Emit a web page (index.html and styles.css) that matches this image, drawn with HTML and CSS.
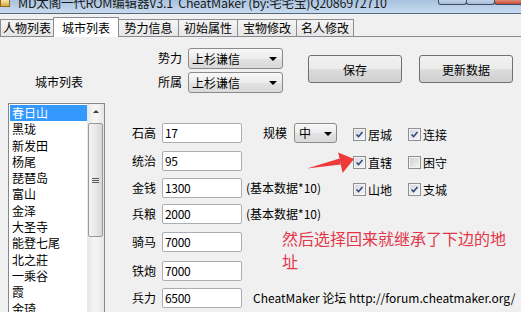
FILE: index.html
```html
<!DOCTYPE html>
<html lang="zh-CN">
<head>
<meta charset="utf-8">
<title>MD太阁一代ROM编辑器</title>
<link rel="stylesheet" href="styles.css">
</head>
<body>
<div class="window">
  <div class="titlebar">
    <span class="app-icon"></span>
    <span class="title">MD太阁一代ROM编辑器V3.1  CheatMaker (by:宅宅宝)Q2086972710</span>
    <div class="winbtns"><span class="wb"></span><span class="wb"></span><span class="wb close"></span></div>
  </div>
  <div class="tabs">
    <div class="tab t1">人物列表</div>
    <div class="tab t2 active">城市列表</div>
    <div class="tab t3">势力信息</div>
    <div class="tab t4">初始属性</div>
    <div class="tab t5">宝物修改</div>
    <div class="tab t6">名人修改</div>
  </div>
  <div class="client">
    <div class="left">
      <div class="list-title">城市列表</div>
      <div class="listbox">
        <ul class="items">
          <li class="sel">春日山</li>
          <li>黑珑</li>
          <li>新发田</li>
          <li>杨尾</li>
          <li>琵琶岛</li>
          <li>富山</li>
          <li>金泽</li>
          <li>大圣寺</li>
          <li>能登七尾</li>
          <li>北之莊</li>
          <li>一乘谷</li>
          <li>霞</li>
          <li>金琦</li>
        </ul>
        <div class="vscroll">
          <div class="sb-up"><span class="tri-up"></span></div>
          <div class="thumb"><span class="grip"></span></div>
        </div>
      </div>
    </div>
    <div class="right">
      <div class="top">
        <div class="combos">
          <span class="lbl">势力</span><div class="combo">上杉谦信</div>
          <span class="lbl">所属</span><div class="combo">上杉谦信</div>
        </div>
        <div class="btn btn-save">保存</div>
        <div class="btn btn-refresh">更新数据</div>
      </div>
      <div class="fields">
        <span class="flbl">石高</span><div class="inp">17</div>
        <div class="scale"><span class="scale-lbl">规模</span><div class="combo small">中</div></div>
        <div class="cb c4"><span class="box on"><svg viewBox="0 0 13 13"><path d="M3 6.5 L5.4 9 L10 3.5"/></svg></span>居城</div>
        <div class="cb c5"><span class="box on"><svg viewBox="0 0 13 13"><path d="M3 6.5 L5.4 9 L10 3.5"/></svg></span>连接</div>

        <span class="flbl">统治</span><div class="inp">95</div>
        <div class="cb c4"><span class="box on"><svg viewBox="0 0 13 13"><path d="M3 6.5 L5.4 9 L10 3.5"/></svg></span>直辖</div>
        <div class="cb c5"><span class="box off"></span>困守</div>

        <span class="flbl">金钱</span><div class="inp">1300</div>
        <div class="note">(基本数据*10)</div>
        <div class="cb c4"><span class="box on"><svg viewBox="0 0 13 13"><path d="M3 6.5 L5.4 9 L10 3.5"/></svg></span>山地</div>
        <div class="cb c5"><span class="box on"><svg viewBox="0 0 13 13"><path d="M3 6.5 L5.4 9 L10 3.5"/></svg></span>支城</div>

        <span class="flbl">兵粮</span><div class="inp">2000</div>
        <div class="note">(基本数据*10)</div>

        <span class="flbl">骑马</span><div class="inp">7000</div>
        <div class="memo">然后选择回来就继承了下边的地<br>址</div>

        <span class="flbl">铁炮</span><div class="inp">7000</div>

        <span class="flbl">兵力</span><div class="inp">6500</div>
        <div class="foot">CheatMaker 论坛 http://forum.cheatmaker.org/</div>
      </div>
    </div>
  </div>
  <svg class="annot" viewBox="0 0 521 312" aria-hidden="true">
    <polygon points="307,168.5 340.8,164.6 339.6,158.6"/>
    <polygon points="354,159 338.2,152.5 342.6,173"/>
  </svg>
</div>
</body>
</html>
```
FILE: styles.css
```css
html, body {
  margin: 0;
  padding: 0;
}
body {
  width: 521px;
  height: 312px;
  overflow: hidden;
  background: #f0f0f0;
  font-family: "Noto Sans CJK SC", "Noto Sans", sans-serif;
  font-size: 12px;
  color: #000;
}
.window {
  position: relative;
  height: 312px;
  overflow: hidden;
}

/* title bar */
.titlebar {
  height: 13px;
  border-bottom: 1px solid #56687e;
  background: linear-gradient(#a8c2de, #c8dbef);
  display: flex;
  align-items: flex-start;
  overflow: hidden;
}
.app-icon {
  flex: none;
  width: 8px;
  height: 6px;
  background: linear-gradient(#f6e7b0, #d9a93a);
  border: 1px solid #8a6d1e;
  border-top: none;
}
.title {
  margin-left: 8px;
  margin-top: -3px;
  font-size: 12.5px;
  line-height: 12.5px;
  letter-spacing: -0.2px;
  white-space: pre;
  color: #1a1a1a;
}
.winbtns {
  margin-left: auto;
  display: flex;
}
.wb {
  width: 27px;
  height: 4px;
  border: 1px solid #3c4d65;
  border-top: none;
  border-radius: 0 0 3px 3px;
  background: linear-gradient(#c2d3e6, #a4bad4);
  margin-right: -1px;
}
.wb.close {
  width: 43px;
  margin-right: -18px;
  background: linear-gradient(#e08a74, #c74a36);
}

/* tabs */
.tabs {
  height: 22px;
  display: flex;
  align-items: flex-end;
  border-bottom: 1px solid #898c95;
}
.tab {
  box-sizing: border-box;
  height: 17px;
  border: 1px solid #898c95;
  border-bottom: none;
  margin-right: -1px;
  background: linear-gradient(#f4f4f4, #e6e6e6);
  text-align: center;
  line-height: 16px;
  font-size: 12px;
}
.tab.active {
  position: relative;
  z-index: 1;
  height: 20px;
  margin-bottom: -1px;
  background: #fff;
  line-height: 17px;
  padding-top: 1px;
}
.t1 { width: 54px; }
.t2 { width: 66px; }
.t3 { width: 61px; }
.t4 { width: 60px; }
.t5 { width: 60px; }
.t6 { width: 58px; }

/* client */
.client {
  display: flex;
}
.left {
  flex: none;
  width: 102px;
  padding-left: 8px;
}
.list-title {
  margin-top: 37px;
  line-height: 16px;
  text-align: center;
}
.listbox {
  margin-top: 13px;
  box-sizing: border-box;
  width: 97px;
  height: 212px;
  border: 1px solid #828790;
  border-bottom: none;
  background: #fff;
  display: flex;
  overflow: hidden;
}
.items {
  list-style: none;
  margin: 0;
  padding: 1px 0 0 1px;
  flex: 1;
}
.items li {
  height: 16.3px;
  line-height: 16.3px;
  padding-left: 2px;
  white-space: nowrap;
}
.items li.sel {
  background: #3399ff;
  color: #fff;
}
.vscroll {
  flex: none;
  width: 17px;
  background: linear-gradient(90deg, #e6e6e6, #f4f4f4 40%, #f4f4f4 60%, #e6e6e6);
}
.sb-up {
  height: 17px;
  display: flex;
  justify-content: center;
  align-items: center;
}
.tri-up {
  width: 0;
  height: 0;
  border-left: 3px solid transparent;
  border-right: 3px solid transparent;
  border-bottom: 3px solid #3c3c3c;
  margin-top: -3px;
}
.thumb {
  margin: 2px 1px 0 1px;
  height: 114px;
  box-sizing: border-box;
  border: 1px solid #989898;
  border-radius: 2px;
  background: linear-gradient(90deg, #f3f3f3, #e9e9e9 50%, #d6d6d6);
  display: flex;
  justify-content: center;
  align-items: center;
}
.grip {
  width: 7px;
  height: 5px;
  background: repeating-linear-gradient(#5a5a5a 0, #5a5a5a 1px, transparent 1px, transparent 2px);
}

.right {
  flex: 1;
}
.top {
  display: flex;
  align-items: flex-start;
  margin-top: 11px;
}
.combos {
  display: grid;
  grid-template-columns: 25px 95px;
  column-gap: 5px;
  row-gap: 3px;
  margin-left: 48px;
}
.lbl {
  line-height: 19px;
}
.combo {
  position: relative;
  box-sizing: border-box;
  height: 21px;
  border: 1px solid #8b8b8b;
  border-radius: 3px;
  background: linear-gradient(#f8f8f8, #ececec 50%, #e2e2e2 51%, #dadada);
  padding-left: 3px;
  line-height: 19px;
}
.combo::after {
  content: "";
  position: absolute;
  right: 5px;
  top: 8px;
  border-left: 4px solid transparent;
  border-right: 4px solid transparent;
  border-top: 4px solid #000;
}
.combo.small {
  width: 43px;
  height: 20px;
  line-height: 18px;
  padding-left: 4px;
}
.combo.small::after {
  right: 4px;
  top: 8px;
}
.btn {
  box-sizing: border-box;
  width: 94px;
  height: 28px;
  margin-top: 7px;
  border: 1px solid #707070;
  border-radius: 3px;
  background: linear-gradient(#f2f2f2, #ebebeb 49%, #dddddd 50%, #cfcfcf);
  display: flex;
  align-items: center;
  justify-content: center;
}
.btn-save { margin-left: 25px; }
.btn-refresh { margin-left: 17px; }

.fields {
  display: grid;
  grid-template-columns: 52px 80px 111px 55px 1fr;
  grid-template-rows: 28px 27px 26px 28px 29px 27px 20px;
  margin-top: 30px;
}
.flbl {
  grid-column: 1;
  text-align: right;
  padding-right: 6px;
  line-height: 20px;
}
.inp {
  grid-column: 2;
  box-sizing: border-box;
  height: 20px;
  border: 1px solid #abadb3;
  border-radius: 2px;
  background: #fff;
  padding-left: 2px;
  line-height: 18px;
  letter-spacing: -0.3px;
}
.scale {
  grid-column: 3;
  display: flex;
  align-items: flex-start;
  padding-left: 21px;
}
.scale-lbl {
  line-height: 20px;
  margin-right: 7px;
}
.note {
  grid-column: 3;
  padding-left: 4px;
  line-height: 20px;
  white-space: nowrap;
}
.cb {
  display: flex;
  align-items: center;
  gap: 2px;
  height: 20px;
  margin-top: 1px;
}
.c4 { grid-column: 4; }
.c5 { grid-column: 5; }
.box {
  box-sizing: border-box;
  width: 13px;
  height: 13px;
  border: 1px solid #8e8f8f;
  background: linear-gradient(135deg, #d2d6de, #f6f7f9);
  box-shadow: inset 0 0 0 1px #f4f4f4;
}
.box.off {
  background: linear-gradient(135deg, #cfcfcf, #f4f4f4);
}
.box svg {
  display: block;
  width: 11px;
  height: 11px;
}
.box path {
  fill: none;
  stroke: #2e437a;
  stroke-width: 1.8;
}
.memo {
  grid-column: 3 / 6;
  grid-row: 5 / 7;
  align-self: start;
  margin-top: -5px;
  padding-left: 40px;
  color: #e4364a;
  font-size: 16px;
  line-height: 23px;
  white-space: nowrap;
}
.foot {
  grid-column: 3 / 6;
  padding-left: 11px;
  font-size: 12px;
  line-height: 20px;
  white-space: nowrap;
}

.annot {
  position: absolute;
  left: 0;
  top: 0;
  width: 521px;
  height: 312px;
  pointer-events: none;
}
.annot polygon {
  fill: #ee3a3a;
}
```
